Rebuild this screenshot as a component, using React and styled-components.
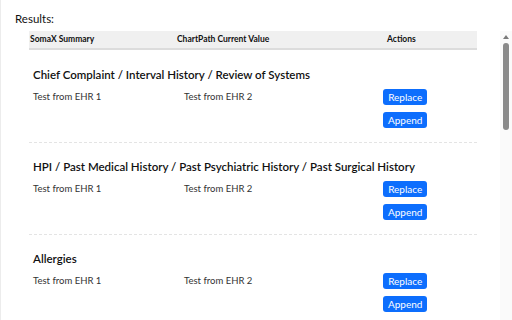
import React from "react";
import styled, { createGlobalStyle } from "styled-components";

const GlobalStyle = createGlobalStyle`
  html, body {
    margin: 0;
    padding: 0;
    background: #ffffff;
    overflow: hidden;
  }
  body {
    font-family: Lato, "Noto Sans", sans-serif;
    color: #222;
  }
`;

const Panel = styled.div`
  display: flex;
  flex-direction: column;
  height: 320px;
  border-left: 1px solid #ececec;
  box-sizing: border-box;
  overflow: hidden;
`;

const Heading = styled.h3`
  margin: 0;
  padding: 11px 0 0 14px;
  font-size: 11.5px;
  line-height: 16px;
  font-weight: 400;
  color: #111;
`;

const ScrollArea = styled.div`
  display: flex;
  flex: 1;
  min-height: 0;
  margin-top: 4px;
`;

const Content = styled.div`
  flex: 1;
  min-width: 0;
  overflow: hidden;
  padding: 0 23px 0 28px;
`;

const Track = styled.div`
  width: 12px;
  flex-shrink: 0;
  background: #fafafa;
  display: flex;
  flex-direction: column;
  align-items: center;
`;

const Arrow = styled.svg`
  display: block;
  margin: 4px 0 4px;
`;

const Thumb = styled.div`
  width: 6px;
  height: 87px;
  border-radius: 3px;
  background: #8a8a8a;
`;

const TableHead = styled.div`
  display: grid;
  grid-template-columns: 147px 210px 1fr;
  padding-left: 1px;
  height: 17px;
  background: #f0f0f0;
  border-bottom: 2px solid #dcdcdc;
  font-size: 8.5px;
  line-height: 17px;
  font-weight: 700;
  color: #111;
`;

const Section = styled.div`
  border-top: 1px dashed ${props => (props.first ? "transparent" : "#e4e4e4")};
  padding: 16px 0 14px;
`;

const Title = styled.div`
  padding-left: 4px;
  font-size: 11.5px;
  line-height: 16px;
  font-weight: 600;
  color: #111;
`;

const Row = styled.div`
  display: grid;
  grid-template-columns: 151px 199px 1fr;
  padding-left: 4px;
  margin-top: 6px;
`;

const Cell = styled.div`
  font-size: 9.5px;
  line-height: 16px;
  color: #333;
`;

const Actions = styled.div`
  display: inline-flex;
  flex-direction: column;
  align-items: stretch;
  justify-self: start;
  gap: 7px;
`;

const ActionButton = styled.button`
  height: 16px;
  padding: 0 5px;
  border: 0;
  border-radius: 3px;
  background: #0d6efd;
  color: #fff;
  font-family: inherit;
  font-size: 10px;
  line-height: 16px;
  cursor: pointer;
`;

const sections = [
  "Chief Complaint / Interval History / Review of Systems",
  "HPI / Past Medical History / Past Psychiatric History / Past Surgical History",
  "Allergies"
];

export default function App() {
  return (
    <>
      <GlobalStyle />
      <Panel>
        <Heading>Results:</Heading>
        <ScrollArea>
          <Content>
            <TableHead>
              <div>SomaX Summary</div>
              <div>ChartPath Current Value</div>
              <div>Actions</div>
            </TableHead>
            {sections.map((title, i) => (
              <Section key={title} first={i === 0}>
                <Title>{title}</Title>
                <Row>
                  <Cell>Test from EHR 1</Cell>
                  <Cell>Test from EHR 2</Cell>
                  <Actions>
                    <ActionButton>Replace</ActionButton>
                    <ActionButton>Append</ActionButton>
                  </Actions>
                </Row>
              </Section>
            ))}
          </Content>
          <Track>
            <Arrow width="6" height="4" viewBox="0 0 6 4">
              <polygon points="3,0 6,4 0,4" fill="#7a7a7a" />
            </Arrow>
            <Thumb />
          </Track>
        </ScrollArea>
      </Panel>
    </>
  );
}
